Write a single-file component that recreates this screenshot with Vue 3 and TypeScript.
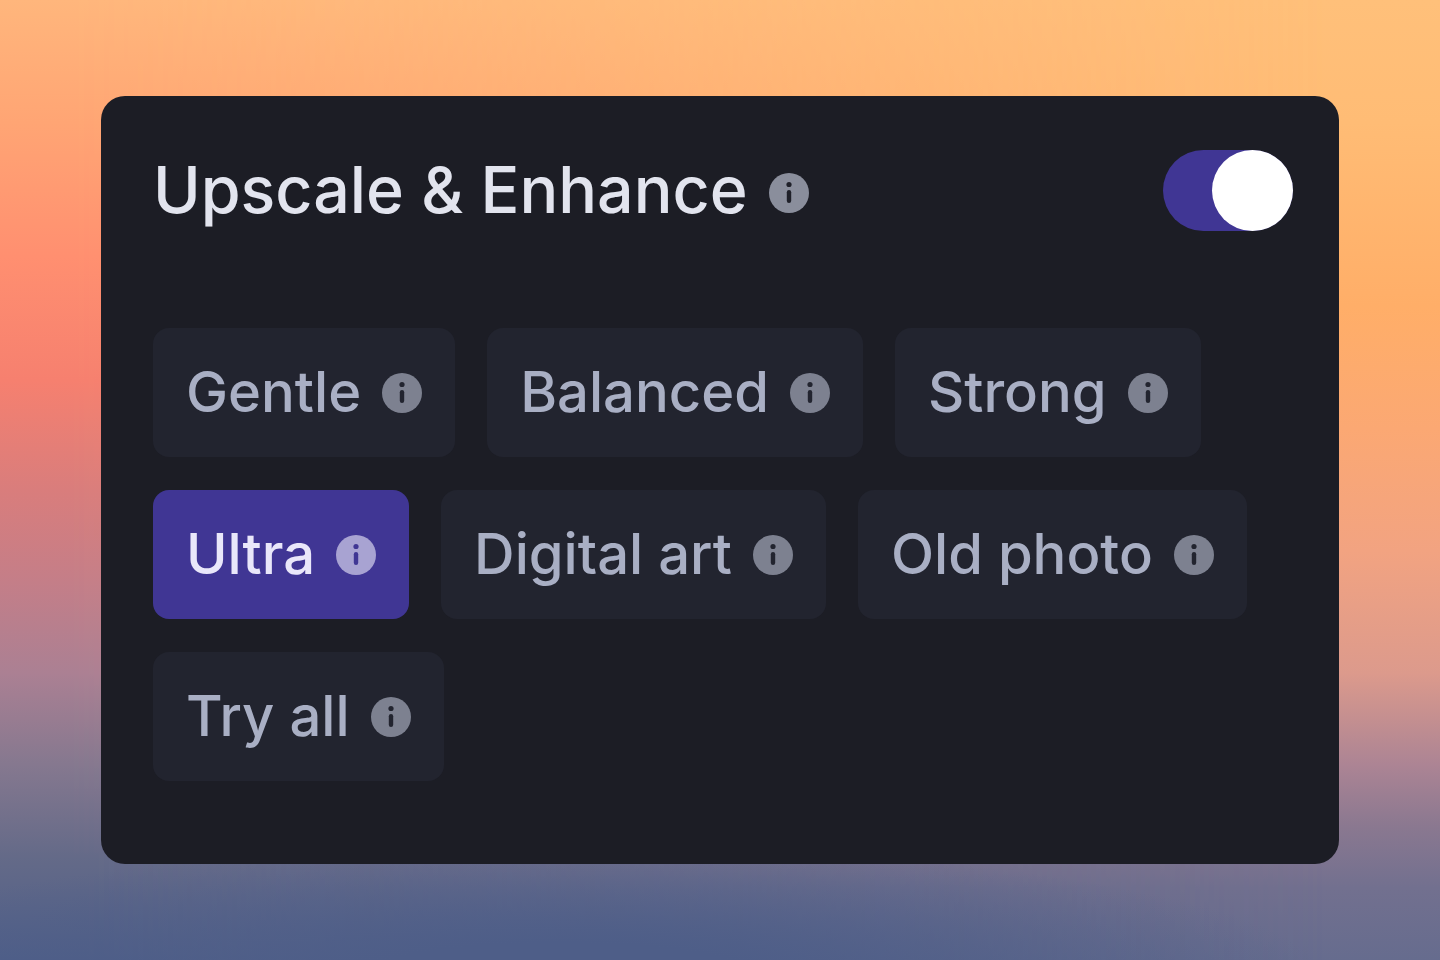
<script setup lang="ts">
interface Chip {
  label: string
  active?: boolean
}

const rows: Chip[][] = [
  [{ label: 'Gentle' }, { label: 'Balanced' }, { label: 'Strong' }],
  [{ label: 'Ultra', active: true }, { label: 'Digital art' }, { label: 'Old photo' }],
  [{ label: 'Try all' }]
]
</script>

<template>
  <div class="page">
    <section class="card">
      <header class="card__head">
        <div class="card__title">
          <h1>Upscale &amp; Enhance</h1>
          <svg class="info" viewBox="0 0 40 40" aria-hidden="true">
            <circle cx="20" cy="20" r="20" fill="currentColor" />
            <circle class="info__dot" cx="20" cy="11.5" r="2.6" />
            <rect class="info__dot" x="17.8" y="17" width="4.4" height="13" rx="2.2" />
          </svg>
        </div>
        <div class="toggle"><span class="toggle__knob" /></div>
      </header>

      <div class="chips">
        <div v-for="(row, i) in rows" :key="i" class="chips__row">
          <button
            v-for="chip in row"
            :key="chip.label"
            type="button"
            :class="['chip', { 'chip--active': chip.active }]"
          >
            <span>{{ chip.label }}</span>
            <svg class="info" viewBox="0 0 40 40" aria-hidden="true">
              <circle cx="20" cy="20" r="20" fill="currentColor" />
              <circle class="info__dot" cx="20" cy="11.5" r="2.6" />
              <rect class="info__dot" x="17.8" y="17" width="4.4" height="13" rx="2.2" />
            </svg>
          </button>
        </div>
      </div>
    </section>
  </div>
</template>

<style>
html,
body {
  margin: 0;
}
</style>

<style scoped>
.page {
  position: relative;
  box-sizing: border-box;
  width: 1440px;
  height: 960px;
  overflow: hidden;
  padding: 96px 101px;
  font-family: Inter, "Liberation Sans", sans-serif;
  background: linear-gradient(
    180deg,
    #ffc07a 0,
    #ffbc75 122px,
    #ffae68 306px,
    #fba873 429px,
    #f2a381 551px,
    #dc9a8c 673px,
    #ac8494 765px,
    #8a7890 827px,
    #72708f 888px,
    #666c8e 960px
  );
}

/* left side of the backdrop runs redder and darker, fades out to the right */
.page::before {
  content: "";
  position: absolute;
  inset: 0;
  background: linear-gradient(
    180deg,
    #ffb67c 0,
    #ffa574 122px,
    #ff8f70 257px,
    #f6806f 380px,
    #d97d7c 490px,
    #c47e88 582px,
    #ab8093 673px,
    #85788f 765px,
    #646a88 857px,
    #4e5e88 960px
  );
  -webkit-mask-image: linear-gradient(90deg, #000 5%, rgba(0, 0, 0, 0) 92%);
  mask-image: linear-gradient(90deg, #000 5%, rgba(0, 0, 0, 0) 92%);
}

/* blue pool along the bottom edge */
.page::after {
  content: "";
  position: absolute;
  inset: 0;
  background: radial-gradient(ellipse 760px 130px at 560px 975px, #4e5e88 25%, rgba(78, 94, 136, 0));
}

.card {
  position: relative;
  z-index: 1;
  box-sizing: border-box;
  height: 768px;
  padding: 54px 46px 0 52px;
  background: #1c1d25;
  border-radius: 24px;
}

.card__head {
  display: flex;
  align-items: center;
  justify-content: space-between;
  height: 81px;
  margin-bottom: 97px;
}

.card__title {
  display: flex;
  align-items: center;
  gap: 21px;
  color: #e2e4ee;
}

.card__title h1 {
  margin: 0;
  font-size: 64.5px;
  font-weight: 500;
  line-height: 81px;
}

.card__title .info {
  color: #8a8e9c;
  margin-top: 5px;
}

.info {
  flex: none;
  width: 40px;
  height: 40px;
}

.info__dot {
  fill: #1f2029;
}

.toggle {
  display: flex;
  justify-content: flex-end;
  width: 130px;
  height: 81px;
  border-radius: 41px;
  background: #403694;
}

.toggle__knob {
  width: 81px;
  height: 81px;
  border-radius: 50%;
  background: #fff;
}

.chips {
  display: flex;
  flex-direction: column;
  gap: 33px;
}

.chips__row {
  display: flex;
  gap: 32px;
}

.chip {
  display: flex;
  align-items: center;
  gap: 21px;
  height: 129px;
  padding: 0 33px;
  border: 0;
  border-radius: 16px;
  background: #22242f;
  color: #a9afc4;
  font: 500 56.2px/1 Inter, "Liberation Sans", sans-serif;
}

.chip span {
  margin-top: -1px;
}

.chip .info {
  color: #7d8190;
}

.chip .info__dot {
  fill: #22242f;
}

.chip--active {
  background: #403694;
  color: #e9e7fa;
}

.chip--active .info {
  color: #a8a3d2;
}

.chip--active .info__dot {
  fill: #403694;
}
</style>
